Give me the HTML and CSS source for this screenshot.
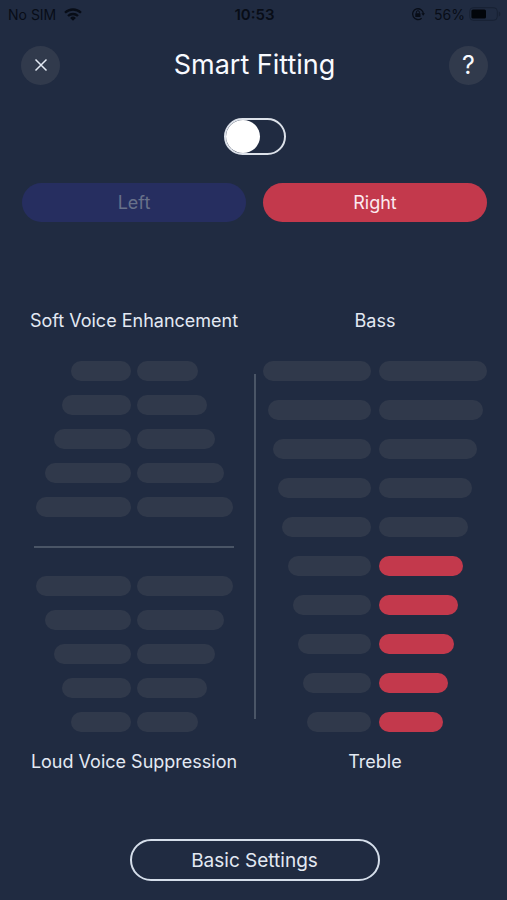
FILE: index.html
```html
<!DOCTYPE html>
<html lang="en">
<head>
<meta charset="utf-8">
<meta name="viewport" content="width=device-width, initial-scale=1">
<title>Smart Fitting</title>
<link rel="stylesheet" href="styles.css">
</head>
<body>
<div class="status">
  <div class="status-side">
    <span>No SIM</span>
    <svg class="wifi" width="18" height="13" viewBox="0 0 18 13" aria-hidden="true">
      <g fill="none" stroke="currentColor" stroke-width="2.3"><path d="M1 4.8a11.4 11.4 0 0 1 16 0"/><path d="M4 8a7.2 7.2 0 0 1 10 0"/></g>
      <path d="M9 12.8 6.1 9.9a4.1 4.1 0 0 1 5.8 0z" fill="currentColor"/>
    </svg>
  </div>
  <span class="clock">10:53</span>
  <div class="status-side status-end">
    <svg class="lock" width="14" height="14" viewBox="0 0 14 14" aria-hidden="true">
      <path d="M10.6 11.2a5.4 5.4 0 1 1 1.8-4.4" fill="none" stroke="currentColor" stroke-width="1.3"/>
      <path d="M10.4 6.2h3.6l-1.8 2.5z" fill="currentColor"/>
      <rect x="4.3" y="6.2" width="5.2" height="3.8" rx=".6" fill="currentColor"/>
      <path d="M5.4 6.4V5.2a1.5 1.5 0 0 1 3 0v1.2" fill="none" stroke="currentColor"/>
    </svg>
    <span>56%</span>
    <svg width="32" height="14" viewBox="0 0 32 14" aria-hidden="true">
      <rect x=".7" y=".7" width="27.6" height="12.6" rx="3.6" fill="none" stroke="#172133"/>
      <rect x="2.4" y="2.4" width="14.6" height="9.2" rx="1.6" fill="#02050a"/>
      <path d="M29.8 4.6a2.6 2.6 0 0 1 0 4.8z" fill="#172133"/>
    </svg>
  </div>
</div>

<header class="header">
  <button class="round" type="button" aria-label="Close">
    <svg width="14" height="14" viewBox="0 0 14 14" aria-hidden="true"><path d="M1.5 1.5l11 11M12.5 1.5l-11 11" stroke="currentColor" stroke-width="1.5"/></svg>
  </button>
  <h1 class="title">Smart Fitting</h1>
  <button class="round help" type="button" aria-label="Help">?</button>
</header>

<main class="main">
  <input class="switch" type="checkbox" role="switch" aria-label="Smart Fitting">

  <div class="ears">
    <button class="ear ear-left" type="button">Left</button>
    <button class="ear ear-right" type="button">Right</button>
  </div>

  <div class="levels">
    <section class="panel">
      <h2 class="label">Soft Voice Enhancement</h2>
      <div class="chart voice">
        <div class="bars">
          <div class="row"><i style="width:55%"></i><i style="width:56%"></i></div>
          <div class="row"><i style="width:63%"></i><i style="width:64%"></i></div>
          <div class="row"><i style="width:71%"></i><i style="width:72%"></i></div>
          <div class="row"><i style="width:79%"></i><i style="width:80%"></i></div>
          <div class="row"><i style="width:87%"></i><i style="width:88%"></i></div>
        </div>
        <hr class="rule">
        <div class="bars">
          <div class="row"><i style="width:87%"></i><i style="width:88%"></i></div>
          <div class="row"><i style="width:79%"></i><i style="width:80%"></i></div>
          <div class="row"><i style="width:71%"></i><i style="width:72%"></i></div>
          <div class="row"><i style="width:63%"></i><i style="width:64%"></i></div>
          <div class="row"><i style="width:55%"></i><i style="width:56%"></i></div>
        </div>
      </div>
      <h2 class="label">Loud Voice Suppression</h2>
    </section>

    <div class="separator"></div>

    <section class="panel">
      <h2 class="label">Bass</h2>
      <div class="chart tone">
        <div class="row"><i style="width:100%"></i><i style="width:100%"></i></div>
        <div class="row"><i style="width:95%"></i><i style="width:96%"></i></div>
        <div class="row"><i style="width:91%"></i><i style="width:91%"></i></div>
        <div class="row"><i style="width:86%"></i><i style="width:86%"></i></div>
        <div class="row"><i style="width:82%"></i><i style="width:82%"></i></div>
        <div class="row"><i style="width:77%"></i><i class="on" style="width:78%"></i></div>
        <div class="row"><i style="width:72%"></i><i class="on" style="width:73%"></i></div>
        <div class="row"><i style="width:68%"></i><i class="on" style="width:69%"></i></div>
        <div class="row"><i style="width:63%"></i><i class="on" style="width:64%"></i></div>
        <div class="row"><i style="width:59%"></i><i class="on" style="width:59%"></i></div>
      </div>
      <h2 class="label">Treble</h2>
    </section>
  </div>

  <button class="settings" type="button">Basic Settings</button>
</main>
</body>
</html>
```
FILE: styles.css
```css
* { box-sizing: border-box; }

body {
  margin: 0;
  min-height: 100vh;
  background: #202b41;
  color: #e3e9f3;
  font-family: Inter, "Liberation Sans", sans-serif;
  font-size: 18px;
}

button {
  border: 0;
  padding: 0;
  font: inherit;
  color: inherit;
  cursor: pointer;
}

h1, h2 { margin: 0; font-weight: 400; }

.status {
  display: grid;
  grid-template-columns: 1fr auto 1fr;
  align-items: center;
  height: 28px;
  padding: 0 6px 0 8px;
  color: #080d17;
  font-size: 14px;
}

.status-side { display: flex; align-items: center; gap: 8px; }
.status-end { justify-content: flex-end; gap: 4px; }
.lock { margin-right: 5px; }
.clock { font-weight: 600; font-size: 15px; }

.header {
  display: flex;
  align-items: center;
  justify-content: space-between;
  padding: 17px 19px 0 21px;
}

.title { font-size: 27px; line-height: 40px; color: #f8faff; }

.round {
  display: flex;
  align-items: center;
  justify-content: center;
  width: 39px;
  height: 39px;
  border-radius: 50%;
  background: #313a4c;
}

.help { font-size: 25px; color: #f8faff; }

.main {
  display: flex;
  flex-direction: column;
  padding: 33px 20px 20px 22px;
}

.switch {
  appearance: none;
  display: flex;
  align-self: center;
  width: 62px;
  height: 37px;
  margin: 0 0 28px;
  border: 2px solid #dce1e9;
  border-radius: 19px;
  cursor: pointer;
}

.switch::before {
  content: "";
  width: 34px;
  height: 33px;
  border-radius: 50%;
  background: #fff;
}

.switch:checked { justify-content: flex-end; }

.ears {
  display: grid;
  grid-template-columns: 1fr 1fr;
  gap: 17px;
}

.ear { height: 39px; border-radius: 20px; }
.ear-left { background: #262e60; color: #68718a; }
.ear-right { background: #c3394c; color: #fbeaf0; }

.levels {
  display: grid;
  grid-template-columns: 1fr 17px 1fr;
  margin-top: 87px;
}

.panel { display: flex; flex-direction: column; }

.label {
  font-size: 18px;
  line-height: 24px;
  text-align: center;
  white-space: nowrap;
}

.chart {
  display: flex;
  flex-direction: column;
  justify-content: space-between;
  height: 371px;
  margin: 28px 0 18px;
}

.bars { display: grid; gap: 14px; }

.row {
  display: grid;
  grid-template-columns: 1fr 1fr;
  gap: 6px;
}

.tone .row { gap: 8px; }

.row i {
  height: 20px;
  border-radius: 10px;
  background: #30394b;
}

.row i:first-child { justify-self: end; }
.row .on { background: #c3394c; }

.rule {
  width: 200px;
  height: 2px;
  margin: 0 auto;
  border: 0;
  background: #4a5566;
}

.separator {
  justify-self: center;
  width: 2px;
  margin: 65px 0 55px;
  background: #4a5566;
}

.settings {
  align-self: center;
  width: 250px;
  height: 42px;
  margin-top: 65px;
  border: 2px solid #d5deea;
  border-radius: 21px;
  background: transparent;
  font-size: 19px;
}
```
